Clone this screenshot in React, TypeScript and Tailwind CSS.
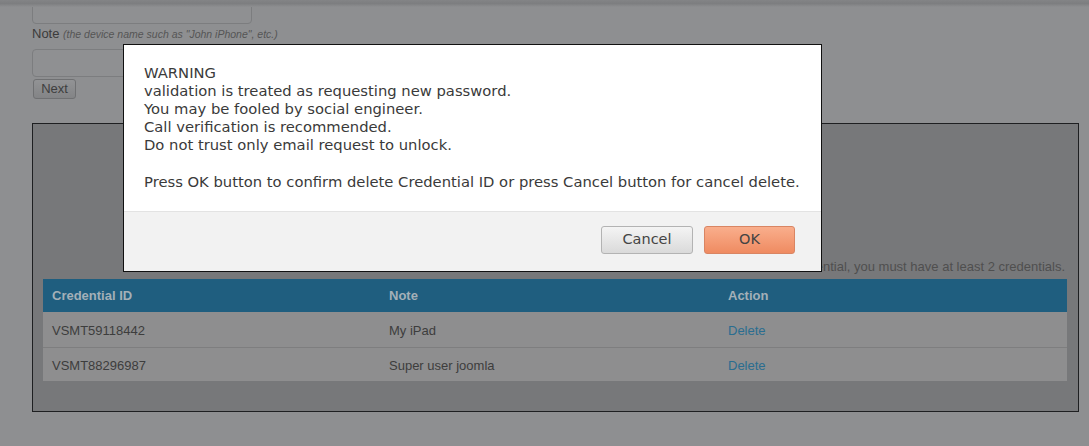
import React from "react";

const rows = [
  { id: "VSMT59118442", note: "My iPad", h: "h-[35px] pt-[3px]" },
  { id: "VSMT88296987", note: "Super user joomla", h: "h-[34px] pt-[2px] border-t border-[#7e7e7f]" },
];

export default function App() {
  return (
    <div className="relative w-[1089px] h-[446px] overflow-hidden bg-[#8e8f91] font-['Liberation_Sans',Arial,sans-serif] text-[#3a3a3a]">
      {/* top shadow band */}
      <div className="absolute left-0 top-0 w-full h-[7px] bg-gradient-to-b from-[#838486] via-[#7d7e80] to-[#8e8f91]" />

      <div className="pl-[32px] pr-[10px]">
        <div className="w-[220px] h-[30px] -mt-[6px] rounded-[4px] border border-[#7c7d7f] bg-[#8f9092]" />
        <div className="mt-[2px] h-[16px] leading-[16px] text-[13px] text-[#3b3b3b]">
          Note{" "}
          <span className="italic text-[10.5px] text-[#555]">
            (the device name such as "John iPhone", etc.)
          </span>
        </div>
        <div className="mt-[7px] w-[220px] h-[28px] rounded-[4px] border border-[#7c7d7f] bg-[#8f9092]" />
        <button className="mt-[2px] ml-[1px] block w-[43px] h-[20px] rounded-[3px] border border-[#6f7072] bg-gradient-to-b from-[#929395] to-[#838486] text-[13px] leading-[18px] text-[#3e3e3e]">
          Next
        </button>

        <div className="mt-[24px] w-[1047px] h-[289px] border border-[#1e1f21] bg-[#77787a] px-[10px] pt-[133px]">
          <div className="h-[20px] leading-[20px] text-right pr-[3px] text-[13px] text-[#4f4f4f]">
            To delete a credential, you must have at least 2 credentials.
          </div>
          <div className="mt-[2px] w-[1024px]">
            <div className="flex h-[33px] items-center bg-[#1f5e7f] text-[13px] font-bold text-[#a3b0b8]">
              <div className="w-[337px] pl-[9px]">Credential ID</div>
              <div className="w-[339px] pl-[9px]">Note</div>
              <div className="flex-1 pl-[9px]">Action</div>
            </div>
            {rows.map((r) => (
              <div
                key={r.id}
                className={`flex items-center bg-[#8e8e8f] text-[13px] text-[#3d3d3d] ${r.h}`}
              >
                <div className="w-[337px] pl-[9px]">{r.id}</div>
                <div className="w-[339px] pl-[9px]">{r.note}</div>
                <div className="flex-1 pl-[9px] text-[#2a6d90]">Delete</div>
              </div>
            ))}
          </div>
        </div>
      </div>

      {/* modal */}
      <div className="absolute left-[123px] top-[44px] w-[699px] h-[228px] border border-[#111] bg-white flex flex-col font-['DejaVu_Sans',sans-serif]">
        <div className="flex-1 pl-[20px] pt-[19px] text-[14.75px] leading-[18px] text-[#3a3a3a]">
          <div>WARNING</div>
          <div>validation is treated as requesting new password.</div>
          <div>You may be fooled by social engineer.</div>
          <div>Call verification is recommended.</div>
          <div>Do not trust only email request to unlock.</div>
          <div className="mt-[19px]">
            Press OK button to confirm delete Credential ID or press Cancel button for cancel delete.
          </div>
        </div>
        <div className="h-[60px] border-t border-[#e3e3e3] bg-[#f2f2f2] flex justify-end gap-[11px] pt-[14px] pr-[26px]">
          <button className="w-[92px] h-[28px] rounded-[3px] border border-[#b3b3b3] bg-gradient-to-b from-[#f4f4f4] to-[#dadada] text-[14.5px] text-[#444]">
            Cancel
          </button>
          <button className="w-[91px] h-[28px] rounded-[3px] border border-[#d98563] bg-gradient-to-b from-[#f9ae8c] to-[#ef8b61] text-[14.5px] text-[#444]">
            OK
          </button>
        </div>
      </div>
    </div>
  );
}
